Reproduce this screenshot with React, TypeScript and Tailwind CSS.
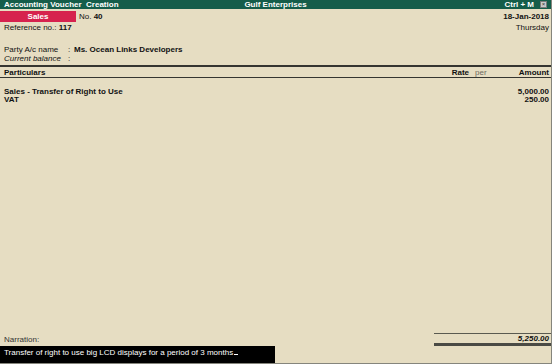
import React from "react";

export default function App() {
  return (
    <div
      className="w-[552px] h-[364px] bg-[#e6ddc2] flex flex-col text-[8px] leading-[9px] text-[#111] border-r border-b border-[#85857c] overflow-hidden"
      style={{ fontFamily: '"Liberation Sans", Arial, sans-serif' }}
    >
      {/* Title bar */}
      <div className="h-[9px] bg-[#155d4a] text-white font-bold grid grid-cols-[1fr_auto_1fr] items-center px-[4px] shrink-0">
        <div className="whitespace-pre">Accounting Voucher  Creation</div>
        <div>Gulf Enterprises</div>
        <div className="flex justify-end items-center gap-[6px] pr-0">
          <span>Ctrl + M</span>
          <span className="w-[7px] h-[7px] bg-[#c9c9c9] border border-[#7a7a7a] text-[#333] text-[6px] leading-[5px] flex items-center justify-center font-normal">
            ×
          </span>
        </div>
      </div>

      {/* Header rows */}
      <div className="flex items-center mt-[2px] h-[11px] pr-[2px]">
        <div className="w-[76px] h-[11px] bg-[#d6224e] text-white font-bold flex items-center justify-center">
          Sales
        </div>
        <div className="ml-[3px]">
          No. <span className="font-bold">40</span>
        </div>
        <div className="ml-auto font-bold">18-Jan-2018</div>
      </div>
      <div className="flex items-center h-[10px] pl-[4px] pr-[2px]">
        <div>
          Reference no.: <span className="font-bold">117</span>
        </div>
        <div className="ml-auto">Thursday</div>
      </div>

      <div className="mt-[13px] flex items-center h-[9px] pl-[4px]">
        <div className="w-[64px]">Party A/c name</div>
        <div className="w-[6px]">:</div>
        <div className="font-bold">Ms. Ocean Links Developers</div>
      </div>
      <div className="flex items-center h-[9px] pl-[4px] italic">
        <div className="w-[64px]">Current balance</div>
        <div className="w-[6px] not-italic">:</div>
      </div>

      {/* Column header */}
      <div className="mt-[2px] border-t-2 border-b border-[#353530] h-[13px] flex items-center pl-[4px] pr-[2px] font-bold">
        <div>Particulars</div>
        <div className="ml-auto">Rate</div>
        <div className="ml-[6px] font-normal text-[#6d6a60] w-[26px]">per</div>
        <div className="w-[48px] text-right">Amount</div>
      </div>

      {/* Entries */}
      <div className="mt-[9px] flex flex-col font-bold pl-[4px] pr-[2px]">
        <div className="flex h-[8px] items-center">
          <div>Sales - Transfer of Right to Use</div>
          <div className="ml-auto">5,000.00</div>
        </div>
        <div className="flex h-[8px] items-center">
          <div>VAT</div>
          <div className="ml-auto">250.00</div>
        </div>
      </div>

      <div className="flex-1" />

      {/* Bottom */}
      <div className="flex items-end h-[14px]">
        <div className="pl-[4px] pb-[2px] text-[#333]">Narration:</div>
        <div className="ml-auto w-[117px] h-[13px] border-t border-[#5a5a50] border-b-[3px] border-b-[#4a4a44] flex items-center justify-end pr-[2px] font-bold italic">
          5,250.00
        </div>
      </div>
      <div className="h-[17px] w-[275px] bg-black text-white flex items-center pl-[4px] pb-[4px]">
        Transfer of right to use big LCD displays for a period of 3 months
        <span className="inline-block w-[4px] h-[1px] bg-white self-end mb-[4px] ml-[1px]" />
      </div>
    </div>
  );
}
